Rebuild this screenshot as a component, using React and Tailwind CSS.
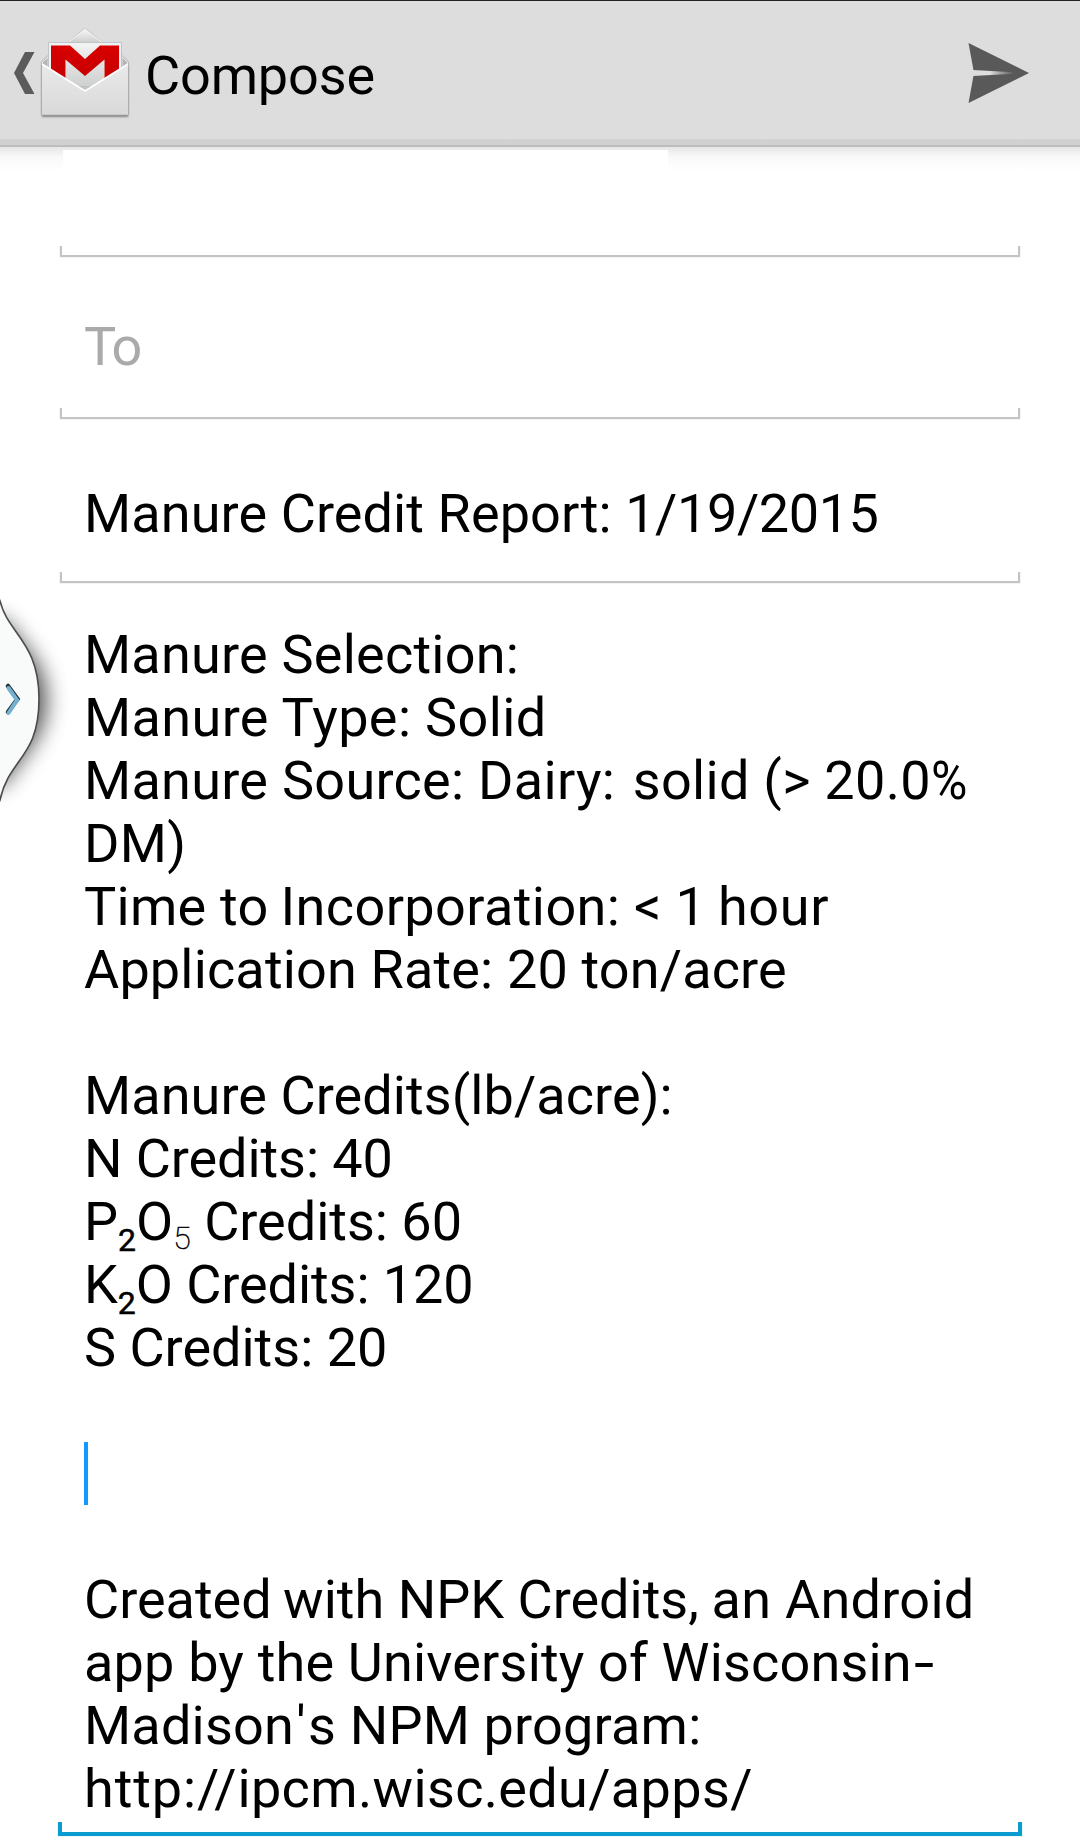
function Line({ className = "", children }) {
  return <p className={`h-[63px] whitespace-pre ${className}`}>{children}</p>;
}

function Sub({ className, children }) {
  return <span className={`text-[32px] leading-none tracking-normal ${className}`}>{children}</span>;
}

function Brackets({ className = "" }) {
  return (
    <div className={`mx-[60px] h-[11px] shrink-0 border-x-2 border-b-2 border-[#c4c4c4] shadow-[0_0_1px_#bbb] [clip-path:inset(0_-2px_-2px_-2px)] ${className}`} />
  );
}

function GmailIcon() {
  return (
    <svg width="92" height="94" viewBox="0 0 92 94" className="ml-[3px] mt-[25px] shrink-0">
      <defs>
        <linearGradient id="front" x1="0" y1="0" x2="0" y2="1">
          <stop offset="0" stopColor="#e9e9e9" />
          <stop offset="1" stopColor="#d9d9d9" />
        </linearGradient>
        <linearGradient id="flap" x1="0" y1="0" x2="0" y2="1">
          <stop offset="0" stopColor="#f6f6f6" />
          <stop offset="0.15" stopColor="#d0d0d0" />
          <stop offset="1" stopColor="#bdbdbd" />
        </linearGradient>
        <linearGradient id="letter" x1="0" y1="0" x2="0" y2="1">
          <stop offset="0" stopColor="#f3f3f3" />
          <stop offset="1" stopColor="#cfd0d0" />
        </linearGradient>
        <linearGradient id="red" x1="0" y1="0" x2="0" y2="1">
          <stop offset="0" stopColor="#d80000" />
          <stop offset="1" stopColor="#c40000" />
        </linearGradient>
        <filter id="drop" x="-10%" y="-10%" width="120%" height="120%">
          <feDropShadow dx="0" dy="0.8" stdDeviation="1" floodColor="#000" floodOpacity="0.65" />
        </filter>
      </defs>
      <g filter="url(#drop)">
        <path d="M30 17 L47 3 L64 17 L84 30 L90 36 V89.500 H4 V36 L10 30Z" fill="url(#flap)" />
      </g>
      <path d="M30 16.500 L47 3.500 L64 16.500" fill="none" stroke="#f7f7f7" strokeWidth="1" />
      <path d="M4 37 L10 31 V44 Z M90 37 L84 31 V44Z" fill="#b4b4b4" stroke="#eee" strokeWidth="0.8" />
      <path d="M10.500 16.500 H83.500 V60 H10.500Z" fill="#eef2f3" stroke="#b9bcbd" strokeWidth="0.8" />
      <path d="M28 18 H66 V60 H28Z" fill="url(#letter)" />
      <path d="M13 19.500 H32 L47 33 L62 19.500 H81 V60 H66.500 V33.500 L47 50 L27.500 33.500 V60 H13Z" fill="url(#red)" />
      <path d="M4 38 L47 65 L90 38 V89 H4Z" fill="url(#front)" />
      <path d="M4 38 L47 65 L90 38" fill="none" stroke="#fff" strokeWidth="1.7" />
      <path d="M4 89.300 H90" stroke="#8f8f8f" strokeWidth="1" />
    </svg>
  );
}

export default function App() {
  return (
    <main className="relative flex h-[1846px] w-[1080px] flex-col overflow-hidden bg-white font-['Roboto',sans-serif] text-[54px] leading-[63px] text-black">
      <header className="flex h-[147px] shrink-0 items-start border-t border-[#231f24] bg-linear-to-b from-[#ddd] from-[138px] via-[#d1d1d1] via-[138px] to-[#d1d1d1] shadow-[inset_0_-2px_0_#bdbdbd]">
        <svg width="22" height="44" viewBox="0 0 22 44" className="ml-[13px] mt-[50px] shrink-0">
          <path d="M12 1 H21.500 L10 22 L21.500 43 H12 L1 22Z" fill="#5b5b5b" />
        </svg>
        <GmailIcon />
        <h1 className="ml-[15px] mt-[43px] tracking-[-0.15px]">Compose</h1>
        <svg width="62" height="62" viewBox="0 0 62 62" className="ml-auto mr-[50px] mt-[41px]">
          <defs>
            <linearGradient id="slit" x1="0" x2="1">
              <stop offset="0.4" stopColor="#ddd" />
              <stop offset="1" stopColor="#595959" />
            </linearGradient>
          </defs>
          <path d="M0.500 1 L61 31 L0.500 61 L6 31Z" fill="#595959" />
          <path d="M5 28 L46 30.300 V31.700 L5 34Z" fill="url(#slit)" />
        </svg>
      </header>

      <div className="h-[24px] shrink-0 bg-linear-to-b from-[#e6e6e6] via-[#f9f9f9] via-[10px] to-white pl-[63px] pt-[3px]">
        <div className="h-[21px] w-[605px] bg-white" />
      </div>
      <Brackets className="mt-[75px]" />
      <p className="mt-[58px] pl-[84px] tracking-[-2px] text-[#aaa]">To</p>
      <Brackets className="mt-[30px]" />
      <p className="mt-[63px] whitespace-pre pl-[84px]">
        <span className="tracking-[0.1px]">Manure Credit Report: </span>
        <span className="tracking-[-0.4px]">1/19/2015</span>
      </p>
      <Brackets className="mt-[27px]" />

      <section className="mt-[40px] pl-[84px]">
        <Line className="tracking-[0.23px]">Manure Selection:</Line>
        <Line className="tracking-[0.38px]">Manure Type: Solid</Line>
        <Line className="tracking-[0.29px]">
          Manure Source: Dairy:<span className="ml-[4px]"> solid (&gt; 20.0</span>
          <span className="inline-block origin-left scale-x-[0.92]">%</span>
        </Line>
        <Line className="tracking-[0.3px]">DM)</Line>
        <Line className="tracking-[0.27px]">
          Time to<span className="-ml-[2px] tracking-[0.42px]"> Incorporation:</span> &lt; 1<span className="-ml-[2px] tracking-[0.6px]"> hour</span>
        </Line>
        <Line className="tracking-[0.16px]">Application Rate: 20 ton/acre</Line>
        <Line />
        <Line className="tracking-[0.08px]">Manure Credits(lb/acre):</Line>
        <Line className="tracking-[-0.08px]">N Credits: 40</Line>
        <Line>
          P<Sub className="align-[-11px] font-normal [-webkit-text-stroke:0.5px_#000]">2</Sub>O<Sub className="align-[-9px] font-thin [-webkit-text-stroke:0.5px_#000]">5</Sub> Credits: 60
        </Line>
        <Line className="tracking-[-0.07px]">
          K<Sub className="align-[-11px] font-normal [-webkit-text-stroke:0.5px_#000]">2</Sub>O Credits: 120
        </Line>
        <Line>S Credits: 20</Line>
        <Line />
        <Line>
          <span className="inline-block h-[63px] w-[4px] bg-[#1199ff]" />
        </Line>
        <Line />
        <Line>
          Created<span className="-ml-[2px]"> with NPK Credits,</span><span className="-ml-[1px] tracking-[0.28px]"> an Android</span>
        </Line>
        <Line className="tracking-[0.18px]">
          app by the University of Wisconsin<span className="ml-[2px] inline-block origin-left scale-x-[1.35]">-</span>
        </Line>
        <Line className="tracking-[0.2px]">
          Madison<span className="inline-block w-[14px] text-center">'</span>s NPM program:
        </Line>
        <Line>
          <span className="tracking-[0.9px]">http://</span>
          <span className="tracking-[0.35px]">ipcm.wisc.edu/apps/</span>
        </Line>
      </section>
      <div className="mx-[58px] mt-[2px] h-[14px] shrink-0 border-x-4 border-b-4 border-[#0a9bd0] shadow-[0_0_1px_#7cc8e4] [clip-path:inset(0_-1px_-1px_-1px)]" />

      <svg width="100" height="240" viewBox="0 0 100 240" className="absolute left-0 top-[580px]">
        <defs>
          <filter id="soft" x="-50%" y="-20%" width="250%" height="140%">
            <feGaussianBlur stdDeviation="11" />
          </filter>
        </defs>
        <path d="M-30 40 L5 40 C15 62 46 78 46 120 C46 162 15 178 5 204 L-30 204Z" fill="#000" opacity="0.7" filter="url(#soft)" />
        <path d="M-4 10 L0 21 C8 54 39 62 39 119 C39 178 9 178 0 220 L-4 230Z" fill="#f8fbfa" stroke="#4b4b4b" strokeWidth="1.6" />
        <path d="M8 106 L17.500 119 L8 132" fill="none" stroke="#263238" strokeWidth="4.500" strokeLinecap="round" />
        <path d="M8.500 108 L17 120 L8.500 133" fill="none" stroke="#73b0d2" strokeWidth="4" strokeLinecap="round" />
      </svg>
    </main>
  );
}
